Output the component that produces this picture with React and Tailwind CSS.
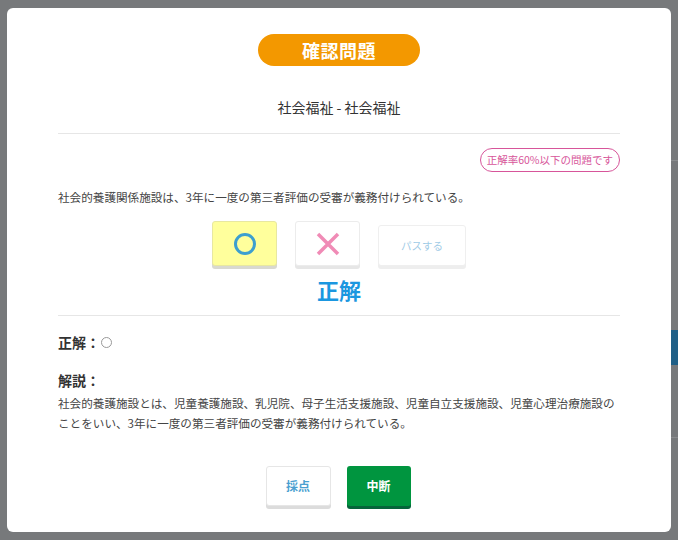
export default function App() {
  return (
    <div
      className="relative w-[678px] h-[540px] bg-[#77797b] overflow-hidden"
      style={{ fontFamily: '"Noto Sans CJK JP", "Noto Sans", sans-serif' }}
    >
      {/* page behind the overlay */}
      <div className="absolute left-[671px] top-[160px] w-[7px] h-px bg-[#8a8c8e]"></div>
      <div className="absolute left-[671px] top-[330px] w-[7px] h-[35px] bg-[#1f5f86]"></div>
      <div className="absolute left-[671px] top-[437px] w-[7px] h-px bg-[#8a8c8e]"></div>

      <div className="absolute left-[7px] top-[8px] w-[664px] h-[524px] bg-white rounded-[6px] px-[51px]">
        <div className="flex justify-center pt-[26px]">
          <div className="w-[162px] h-[32px] rounded-full bg-[#f39800] flex items-center justify-center text-white font-bold text-[18px] tracking-[0.5px]">
            確認問題
          </div>
        </div>
        <div className="text-center text-[14px] text-[#333] mt-[32px] leading-[18px]">社会福祉 - 社会福祉</div>
        <div className="h-px bg-[#e6e6e6] mt-[17px]"></div>

        <div className="flex justify-end mt-[14px]">
          <div className="h-[24px] px-[6px] rounded-full border border-[#d7559a] text-[#d7559a] text-[10.5px] flex items-center">
            正解率60%以下の問題です
          </div>
        </div>
        <div className="text-[11.6px] text-[#444] mt-[17px] leading-[16px]">
          社会的養護関係施設は、3年に一度の第三者評価の受審が義務付けられている。
        </div>

        <div className="flex justify-center items-start gap-[18px] mt-[16px]">
          <div className="w-[65px] h-[45px] rounded-[3px] bg-[#ffff9c] border border-[#e8e8a0] shadow-[0_3px_0_#d9d9d0] flex items-center justify-center">
            <div className="w-[22px] h-[22px] rounded-full border-[3.5px] border-[#3d9fcf]"></div>
          </div>
          <div className="w-[65px] h-[45px] rounded-[3px] bg-white border border-[#ececec] shadow-[0_3px_0_#e6e6e6] flex items-center justify-center">
            <svg width="26" height="26" viewBox="0 0 26 26">
              <path d="M3 3 L23 23 M23 3 L3 23" stroke="#f08bb6" strokeWidth="3.5" strokeLinecap="butt" />
            </svg>
          </div>
          <div className="w-[88px] h-[41px] mt-[4px] rounded-[3px] bg-white border border-[#efefef] shadow-[0_3px_0_#eeeeee] flex items-center justify-center text-[10.5px] text-[#9fcbe6]">
            パスする
          </div>
        </div>
        <div className="text-center text-[22px] font-bold text-[#1b97e0] leading-[28px] mt-[9px]">正解</div>
        <div className="h-px bg-[#e6e6e6] mt-[12px]"></div>

        <div className="flex items-center mt-[16px] text-[14px] font-bold text-[#333] leading-[20px]">
          正解：
          <span className="inline-block w-[11px] h-[11px] rounded-full border border-[#999] ml-[1px]"></span>
        </div>
        <div className="text-[14px] font-bold text-[#333] leading-[20px] mt-[18px]">解説：</div>
        <div className="text-[11.6px] text-[#444] leading-[19.5px] mt-[4px]">
          社会的養護施設とは、児童養護施設、乳児院、母子生活支援施設、児童自立支援施設、児童心理治療施設の
          <br />
          ことをいい、3年に一度の第三者評価の受審が義務付けられている。
        </div>

        <div className="flex justify-center gap-[16px] mt-[33px] mr-[2px]">
          <div className="w-[65px] h-[40px] rounded-[3px] bg-white border border-[#e6e6e6] shadow-[0_3px_0_#dcdcdc] flex items-center justify-center text-[12px] font-bold text-[#4a9fd0]">
            採点
          </div>
          <div className="w-[64px] h-[40px] rounded-[3px] bg-[#00953f] shadow-[0_3px_0_#05643a] flex items-center justify-center text-[12px] font-bold text-white">
            中断
          </div>
        </div>
      </div>
    </div>
  );
}
